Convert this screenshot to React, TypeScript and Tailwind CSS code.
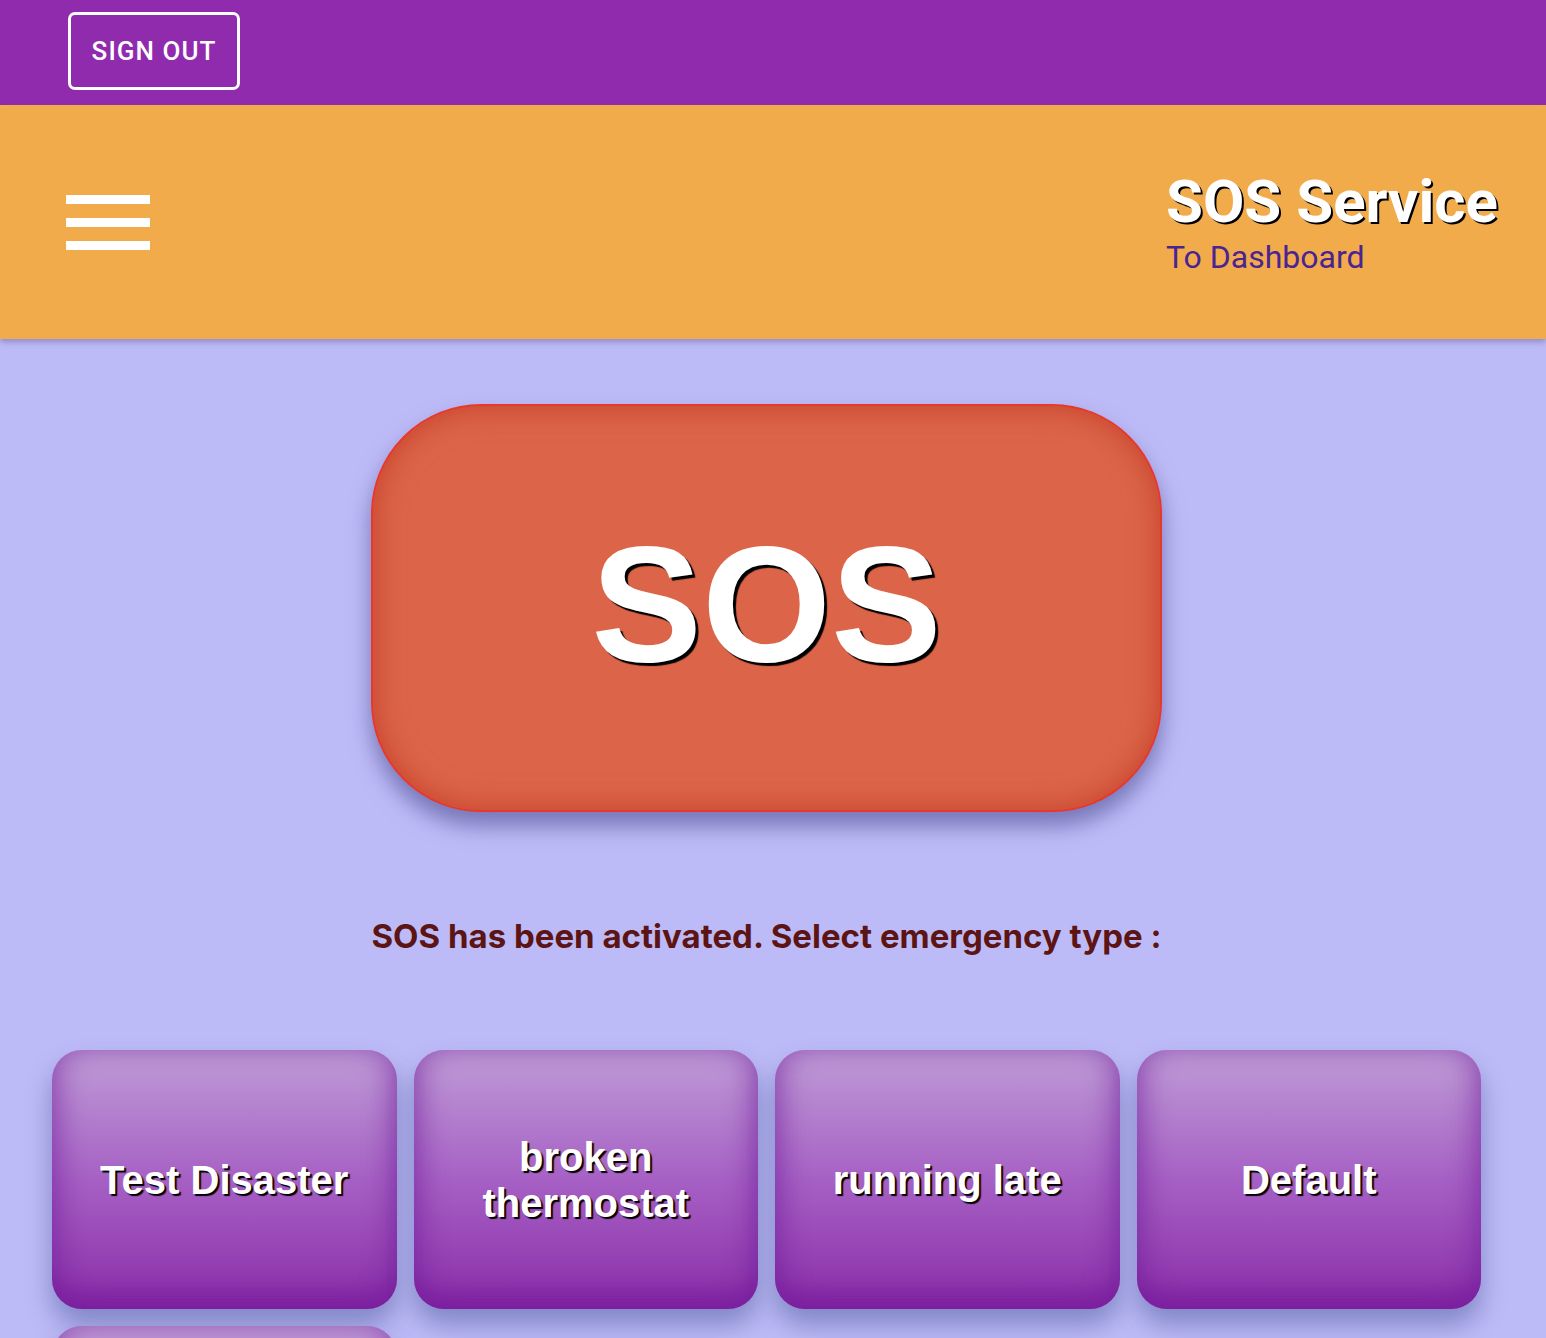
import { useState } from "react"

const types = ["Test Disaster", "broken thermostat", "running late", "Default", ""]

function Hamburger() {
    return (
        <button className="flex flex-col gap-[14px] w-[84px]">
            <span className="block h-[9px] w-full bg-white" />
            <span className="block h-[9px] w-full bg-white" />
            <span className="block h-[9px] w-full bg-white" />
        </button>
    )
}

function TypeCard({ label }: { label: string }) {
    return (
        <button
            className="h-[259px] rounded-[30px] bg-gradient-to-b from-[#bf9cd7] via-[#a660c4] to-[#8a2aa8] shadow-[inset_0_-14px_24px_rgba(110,20,150,0.45),inset_14px_0_22px_rgba(120,40,160,0.25),inset_-14px_0_22px_rgba(120,40,160,0.25),0_16px_26px_rgba(60,70,140,0.45)] flex items-center justify-center px-10 text-white font-bold text-[40px] leading-[46px] [text-shadow:2px_2px_1px_#000]"
            style={{ fontFamily: "'Liberation Sans', Arial, sans-serif" }}
        >
            {label}
        </button>
    )
}

export default function App() {
    const [active] = useState(true)

    return (
        <div className="min-h-[1338px] bg-[#bdbbf7]" style={{ fontFamily: "Roboto, 'Liberation Sans', sans-serif" }}>
            {/* top bar */}
            <div className="h-[105px] bg-[#912bae] flex items-start pt-3 pl-[68px]">
                <button className="h-[78px] w-[172px] border-[3px] border-white rounded-[7px] text-white text-[26px] font-medium tracking-[0.04em]">
                    SIGN OUT
                </button>
            </div>

            {/* header */}
            <header className="h-[234px] bg-[#f2ab4a] shadow-[0_3px_6px_rgba(60,50,120,0.35)] relative flex items-center justify-between pl-[66px] pr-[48px]">
                <Hamburger />
                <div className="flex flex-col pt-1">
                    <h1 className="text-white font-bold text-[60px] leading-[62px] [text-shadow:2px_2px_0_#000]">SOS Service</h1>
                    <a className="text-[#4b2493] text-[32px] leading-[40px] mt-1">To Dashboard</a>
                </div>
            </header>

            {/* content */}
            <main className="w-[1533px] flex flex-col items-center">
                <button
                    className="mt-[65px] w-[791px] h-[408px] rounded-[110px] border-2 border-[#e8372b] bg-[#dc6549] shadow-[inset_0_0_30px_rgba(180,40,20,0.6),0_14px_22px_rgba(60,60,130,0.55)] flex items-center justify-center"
                >
                    <span
                        className="text-white font-bold text-[166px] leading-none [text-shadow:3px_3px_1px_#000] -mt-2"
                        style={{ fontFamily: "'Liberation Sans', Arial, sans-serif" }}
                    >
                        SOS
                    </span>
                </button>

                {active && (
                    <p className="mt-[104px] text-[#5c1414] font-bold text-[33px] leading-[40px]" style={{ fontFamily: "Inter, Roboto, sans-serif" }}>
                        SOS has been activated. Select emergency type :
                    </p>
                )}

                <div className="mt-[94px] w-full px-[52px] grid grid-cols-4 gap-x-[17px] gap-y-[17px]">
                    {types.map((t, i) => (
                        <TypeCard key={i} label={t} />
                    ))}
                </div>
            </main>
        </div>
    )
}
